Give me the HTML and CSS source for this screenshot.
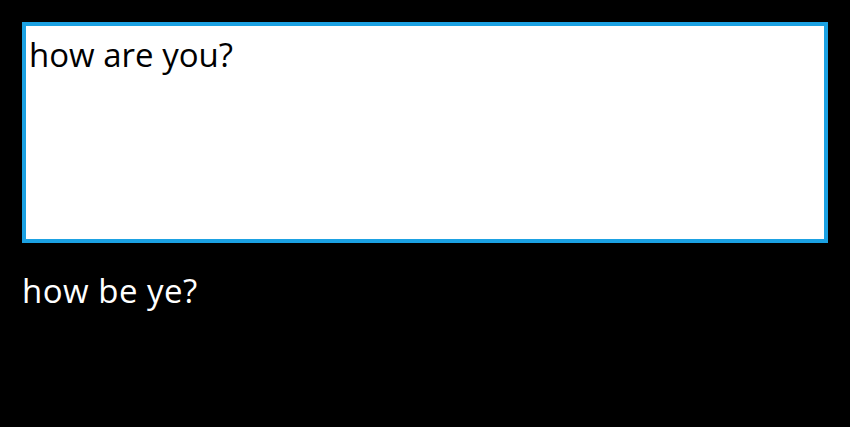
FILE: index.html
```html
<!DOCTYPE html>
<html lang="en">

<head>
    <meta charset="UTF-8">
    <meta name="viewport" content="width=device-width, initial-scale=1.0">
    <title>Document</title>
    <link rel="stylesheet" href="styles.css">
</head>

<body>

    <div id="page">
        <div class="text-box">how are you?</div>
        <p class="answer">how be ye?</p>
    </div>

</body>

</html>
```
FILE: styles.css
```css
* {
    margin: 0;
    padding: 0;
    box-sizing: border-box;
}

body {
    background: #000;
    font-family: "Open Sans", "Noto Sans", sans-serif;
}

#page {
    padding: 22px 22px 0 22px;
}

.text-box {
    height: 221px;
    border: 4px solid #1ba1e2;
    background: #fff;
    color: #000;
    font-size: 33px;
    line-height: 40px;
    padding: 9px 3px;
}

.answer {
    margin-top: 28px;
    color: #fff;
    font-size: 33px;
    line-height: 40px;
    letter-spacing: 0.5px;
}
```
